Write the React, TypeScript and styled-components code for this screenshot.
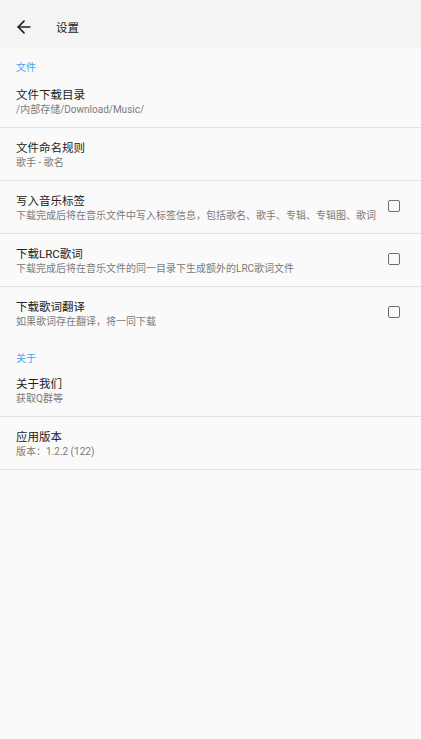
import React from 'react'
import styled, { createGlobalStyle } from 'styled-components'
import { ArrowLeft } from 'lucide-react'

const GlobalStyle = createGlobalStyle`
  html, body {
    margin: 0;
    padding: 0;
    background: #fafafa;
    font-family: Roboto, "Noto Sans CJK SC", sans-serif;
  }
`

interface Pref {
  title: string
  summary: string
  checkbox?: boolean
  divider?: boolean
}

const fileItems: Pref[] = [
  { title: '文件下载目录', summary: '/内部存储/Download/Music/', divider: true },
  { title: '文件命名规则', summary: '歌手 - 歌名', divider: true },
  {
    title: '写入音乐标签',
    summary: '下载完成后将在音乐文件中写入标签信息，包括歌名、歌手、专辑、专辑图、歌词',
    checkbox: true,
    divider: true,
  },
  { title: '下载LRC歌词', summary: '下载完成后将在音乐文件的同一目录下生成额外的LRC歌词文件', checkbox: true, divider: true },
  { title: '下载歌词翻译', summary: '如果歌词存在翻译，将一同下载', checkbox: true },
]

const aboutItems: Pref[] = [
  { title: '关于我们', summary: '获取Q群等', divider: true },
  { title: '应用版本', summary: '版本：1.2.2 (122)', divider: true },
]

export default function App() {
  return (
    <Page>
      <GlobalStyle />
      <Toolbar>
        <BackButton>
          <ArrowLeft size={20} strokeWidth={2} />
        </BackButton>
        <ToolbarTitle>设置</ToolbarTitle>
      </Toolbar>
      <Category>文件</Category>
      {fileItems.map((p) => (
        <PrefRow key={p.title} pref={p} />
      ))}
      <Category $tight>关于</Category>
      {aboutItems.map((p) => (
        <PrefRow key={p.title} pref={p} />
      ))}
    </Page>
  )
}

function PrefRow({ pref }: { pref: Pref }) {
  return (
    <Row $divider={pref.divider}>
      <Texts>
        <Title>{pref.title}</Title>
        <Summary>{pref.summary}</Summary>
      </Texts>
      {pref.checkbox && <CheckBox />}
    </Row>
  )
}

const Page = styled.div`
  min-height: 739px;
  background: #fafafa;
`

const Toolbar = styled.header`
  height: 48px;
  box-sizing: border-box;
  padding-top: 6px;
  display: flex;
  align-items: center;
  background: #f5f4f2;
`

const BackButton = styled.div`
  width: 48px;
  display: flex;
  align-items: center;
  justify-content: center;
  color: #212121;
`

const ToolbarTitle = styled.div`
  margin-left: 8px;
  font-size: 11.5px;
  color: #212121;
`

const Category = styled.div<{ $tight?: boolean }>`
  padding: ${(p) => (p.$tight ? '12px' : '13px')} 16px 0;
  height: ${(p) => (p.$tight ? '12px' : '14px')};
  line-height: 14px;
  font-size: 10px;
  color: #42a5f5;
`

const Row = styled.div<{ $divider?: boolean }>`
  display: flex;
  align-items: center;
  padding: 12px 16px 10px;
  border-bottom: 1px solid ${(p) => (p.$divider ? '#e0e0e0' : 'transparent')};
`

const Texts = styled.div`
  flex: 1;
  min-width: 0;
`

const Title = styled.div`
  font-size: 11.5px;
  line-height: 16px;
  color: #212121;
`

const Summary = styled.div`
  margin-top: -1px;
  font-size: 10px;
  line-height: 15px;
  color: #7a7a7a;
  white-space: nowrap;
`

const CheckBox = styled.div`
  width: 10px;
  height: 10px;
  border: 1.6px solid #6f6f6f;
  border-radius: 2px;
  margin: -4px 5px 0 12px;
  flex: none;
`
